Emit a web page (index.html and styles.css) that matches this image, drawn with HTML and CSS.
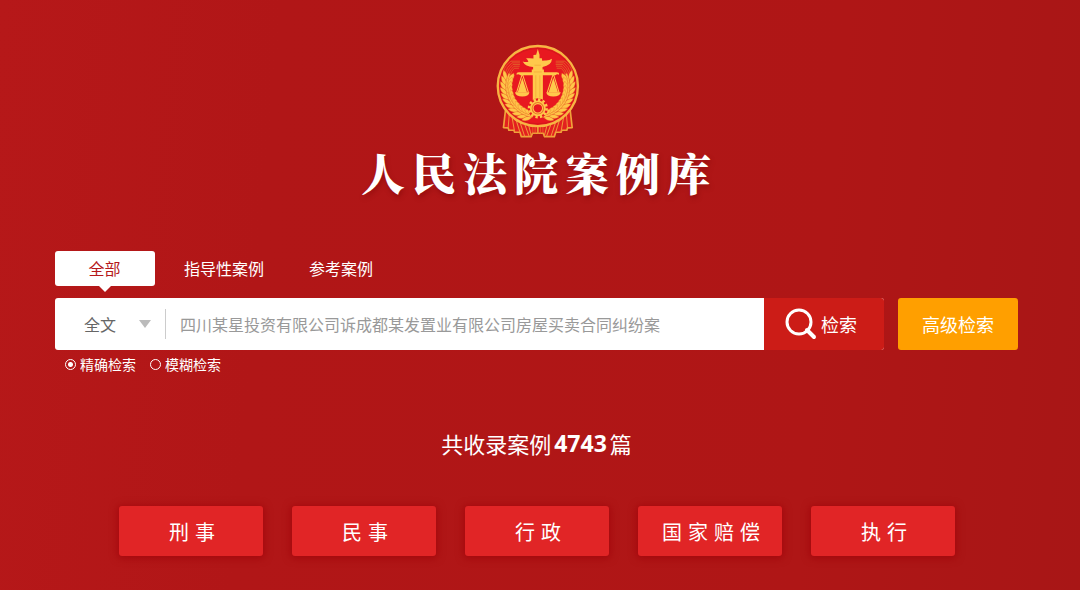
FILE: index.html
```html
<!DOCTYPE html>
<html lang="zh-CN">
<head>
<meta charset="utf-8">
<meta name="viewport" content="width=device-width, initial-scale=1">
<title>人民法院案例库</title>
<link rel="stylesheet" href="styles.css">
</head>
<body>
<main class="page">
  <header class="brand">
    <svg class="emblem" viewBox="27 18 249 285" aria-hidden="true">
      <defs>
        <g id="grain">
          <path d="M54 145q-15-10-12-27q16 8 15 25z"/>
          <path d="M60 145q-2-14 13-25q9 15-8 27z"/>
          <path d="M55 147l6-1 2-22-5 0z"/>
        </g>
        <g id="ear" fill="#ffc648" stroke="#e8742a" stroke-width="1">
          <use href="#grain" transform="rotate(12 150 143)"/>
          <use href="#grain" transform="rotate(3 150 143)"/>
          <use href="#grain" transform="rotate(-6 150 143)"/>
          <use href="#grain" transform="rotate(-15 150 143)"/>
          <use href="#grain" transform="rotate(-24 150 143)"/>
          <use href="#grain" transform="rotate(-33 150 143)"/>
          <use href="#grain" transform="rotate(-42 150 143)"/>
          <use href="#grain" transform="rotate(-51 150 143)"/>
          <use href="#grain" transform="rotate(-60 150 143)"/>
          <use href="#grain" transform="rotate(-69 150 143)"/>
          <use href="#grain" transform="rotate(-78 150 143)"/>
        </g>
        <g id="half">
          <path d="M56 205L49 266l14 1 2 7 15 0 2 6 16 0 4 13 29 0 4-10 16 0V236z" fill="#e3201f" stroke="#f0a23a" stroke-width="5" stroke-linejoin="round"/>
          <path d="M66 228l-3 38M74 232l8 46M86 242l12 38M98 250l14 42M112 256l13 36M124 260l8 32" fill="none" stroke="#f0943a" stroke-width="3"/>
          <path d="M136 262v22M143 262v22M150 262v22" fill="none" stroke="#e8742a" stroke-width="2"/>
        </g>
        <g id="rays" fill="none" stroke="#e0782c" stroke-width="2">
          <path d="M49 100q5-19 22-31h27M54 104q5-18 20-30h24M59 106q5-16 18-27h21M64 108q5-14 16-24h17M69 110q4-12 12-20h14"/>
        </g>
        <g id="pan" fill="#ffc94b">
          <path d="M105 106L88 162M105 106l18 56" fill="none" stroke="#ffc94b" stroke-width="3"/>
          <path d="M105 118l-14 44h28z"/>
          <path d="M83 161h43q-2 13-21 13t-22-13z"/>
        </g>
      </defs>
      <use href="#half"/>
      <use href="#half" transform="matrix(-1 0 0 1 302 0)"/>
      <circle cx="151" cy="143" r="119" fill="#e81820" stroke="#f7b543" stroke-width="7"/>
      <circle cx="151" cy="143" r="112" fill="none" stroke="#c8161a" stroke-width="2"/>
      <use href="#rays"/>
      <use href="#rays" transform="matrix(-1 0 0 1 302 0)"/>
      <use href="#ear"/>
      <use href="#ear" transform="matrix(-1 0 0 1 302 0)"/>
      <use href="#pan"/>
      <use href="#pan" transform="matrix(-1 0 0 1 302 0)"/>
      <path d="M146 50l5-17 5 17v10h7l1 8 8-1q13 1 21-5q-1 20-28 24v8h4v8h38q8 0 7 7-6-3-11 2h-37v80h-30v-80h-37q-5-5-11-2-1-7 7-7h38v-8h4v-8q-23 0-31-16 8 3 17 1-2-7-7-11h10l12 1v-10z" fill="#ffc94b"/>
      <path d="M145 111v66M157 111v66M139 101h24M141 81h19" stroke="#f0a536" stroke-width="2"/>
      <circle cx="151" cy="209" r="30" fill="#e81820"/>
      <circle cx="151" cy="209" r="26" fill="none" stroke="#ffc94b" stroke-width="8" stroke-dasharray="7 6.6"/>
      <circle cx="151" cy="209" r="18" fill="#e81820" stroke="#ffc94b" stroke-width="11"/>
      <circle cx="151" cy="209" r="17" fill="none" stroke="#e8742a" stroke-width="3"/>
    </svg>
    <h1 class="title">人民法院案例库</h1>
  </header>

  <form class="search" onsubmit="return false">
    <nav class="tabs" aria-label="案例类型">
      <button class="tab tab-active" type="button">全部</button>
      <button class="tab" type="button">指导性案例</button>
      <button class="tab" type="button">参考案例</button>
    </nav>
    <div class="bar">
      <div class="field">
        <div class="scope">
          <select class="scope-select" aria-label="检索范围"><option>全文</option></select>
          <svg class="caret" viewBox="0 0 12 8" aria-hidden="true"><path d="M0 0h12L6 8z" fill="#bbb"/></svg>
        </div>
        <input class="query" type="text" aria-label="检索内容" placeholder="四川某星投资有限公司诉成都某发置业有限公司房屋买卖合同纠纷案">
        <button class="submit" type="submit">
          <svg class="lens" viewBox="0 0 32 32" aria-hidden="true"><circle cx="14" cy="14" r="12" fill="none" stroke="#fff" stroke-width="3"/><path d="M22 22l7 7" stroke="#fff" stroke-width="4" stroke-linecap="round"/></svg>
          检索
        </button>
      </div>
      <button class="advanced" type="button">高级检索</button>
    </div>
    <div class="modes">
      <label class="mode"><input class="radio" type="radio" name="mode" checked>精确检索</label>
      <label class="mode"><input class="radio" type="radio" name="mode">模糊检索</label>
    </div>
  </form>

  <p class="count">共收录案例<strong class="number">4743</strong>篇</p>

  <nav class="categories" aria-label="案件类别">
    <a class="category" href="#">刑事</a>
    <a class="category" href="#">民事</a>
    <a class="category" href="#">行政</a>
    <a class="category" href="#">国家赔偿</a>
    <a class="category" href="#">执行</a>
  </nav>
</main>
</body>
</html>
```
FILE: styles.css
```css
* {
  box-sizing: border-box;
}

body {
  margin: 0;
  min-height: 100vh;
  background: linear-gradient(95deg, #b61819 0%, #b11617 25%, #af1616 75%, #a81616 100%);
  color: #fff;
  font-family: "Noto Sans CJK SC", sans-serif;
  font-size: 16px;
  line-height: 24px;
}

button,
input,
select {
  margin: 0;
  padding: 0;
  border: 0;
  font: inherit;
  color: inherit;
}

.page {
  padding: 44px 62px 32px 55px;
}

.brand {
  display: flex;
  flex-direction: column;
  align-items: center;
}

.emblem {
  width: 84px;
  height: 96px;
  margin-left: 2px;
}

.title {
  margin: 0 0 0 6px;
  font-family: "Noto Serif CJK SC", "Noto Sans CJK SC", serif;
  font-size: 44px;
  font-weight: 900;
  line-height: 64px;
  letter-spacing: 7px;
  text-shadow: 1px 3px 5px rgba(110, 0, 0, 0.4);
}

.search {
  margin-top: 47px;
}

.tabs {
  display: flex;
  gap: 14px;
}

.tab {
  position: relative;
  height: 35px;
  padding: 0 16px 2px 15px;
  border-radius: 3px;
  background: none;
}

.tab-active {
  width: 100px;
  background: #fff;
  color: #b5181b;
}

.tab-active::after {
  content: "";
  position: absolute;
  top: 100%;
  left: 50%;
  margin-left: -6px;
  border: 6px solid transparent;
  border-top-color: #fff;
  border-bottom: 0;
}

.bar {
  display: flex;
  gap: 14px;
  height: 52px;
  margin-top: 12px;
}

.field {
  display: flex;
  flex: 1;
  border-radius: 3px;
  background: #fff;
  overflow: hidden;
}

.scope {
  display: flex;
  align-items: center;
  width: 111px;
  height: 30px;
  margin: auto 0;
  padding: 0 14px 0 29px;
  border-right: 1px solid #ccc;
}

.scope-select {
  flex: 1;
  min-width: 0;
  appearance: none;
  background: none;
  color: #666;
}

.caret {
  width: 12px;
  height: 8px;
}

.query {
  flex: 1;
  min-width: 0;
  padding: 0 14px;
  background: none;
  color: #333;
}

.query::placeholder {
  color: #999;
  opacity: 1;
}

.submit {
  display: flex;
  align-items: center;
  justify-content: center;
  gap: 4px;
  width: 120px;
  padding-right: 6px;
  background: #cc1c17;
  font-size: 18px;
}

.lens {
  width: 32px;
  height: 32px;
}

.advanced {
  width: 120px;
  border-radius: 3px;
  background: #ff9f00;
  font-size: 18px;
}

.modes {
  display: flex;
  gap: 14px;
  margin-top: 2px;
  padding-left: 10px;
  font-size: 14px;
}

.mode {
  display: flex;
  align-items: center;
  gap: 4px;
}

.radio {
  appearance: none;
  width: 11px;
  height: 11px;
  border: 1px solid #fff;
  border-radius: 50%;
}

.radio:checked {
  background: radial-gradient(circle, #fff 2px, transparent 3px);
}

.count {
  display: flex;
  align-items: center;
  justify-content: center;
  gap: 3px;
  margin: 51px 0 0;
  font-size: 22px;
  line-height: 32px;
}

.number {
  font-family: "Open Sans", sans-serif;
  font-size: 23px;
}

.categories {
  display: grid;
  grid-template-columns: repeat(5, 1fr);
  gap: 29px;
  margin-top: 47px;
  padding: 0 63px 0 64px;
}

.category {
  padding: 11px 0 9px 8px;
  border-radius: 3px;
  background: #e12526;
  box-shadow: 0 1px 7px 2px rgba(158, 0, 8, 0.6);
  color: #fff;
  font-size: 20px;
  line-height: 30px;
  letter-spacing: 6px;
  text-align: center;
  text-decoration: none;
  white-space: nowrap;
}
```
